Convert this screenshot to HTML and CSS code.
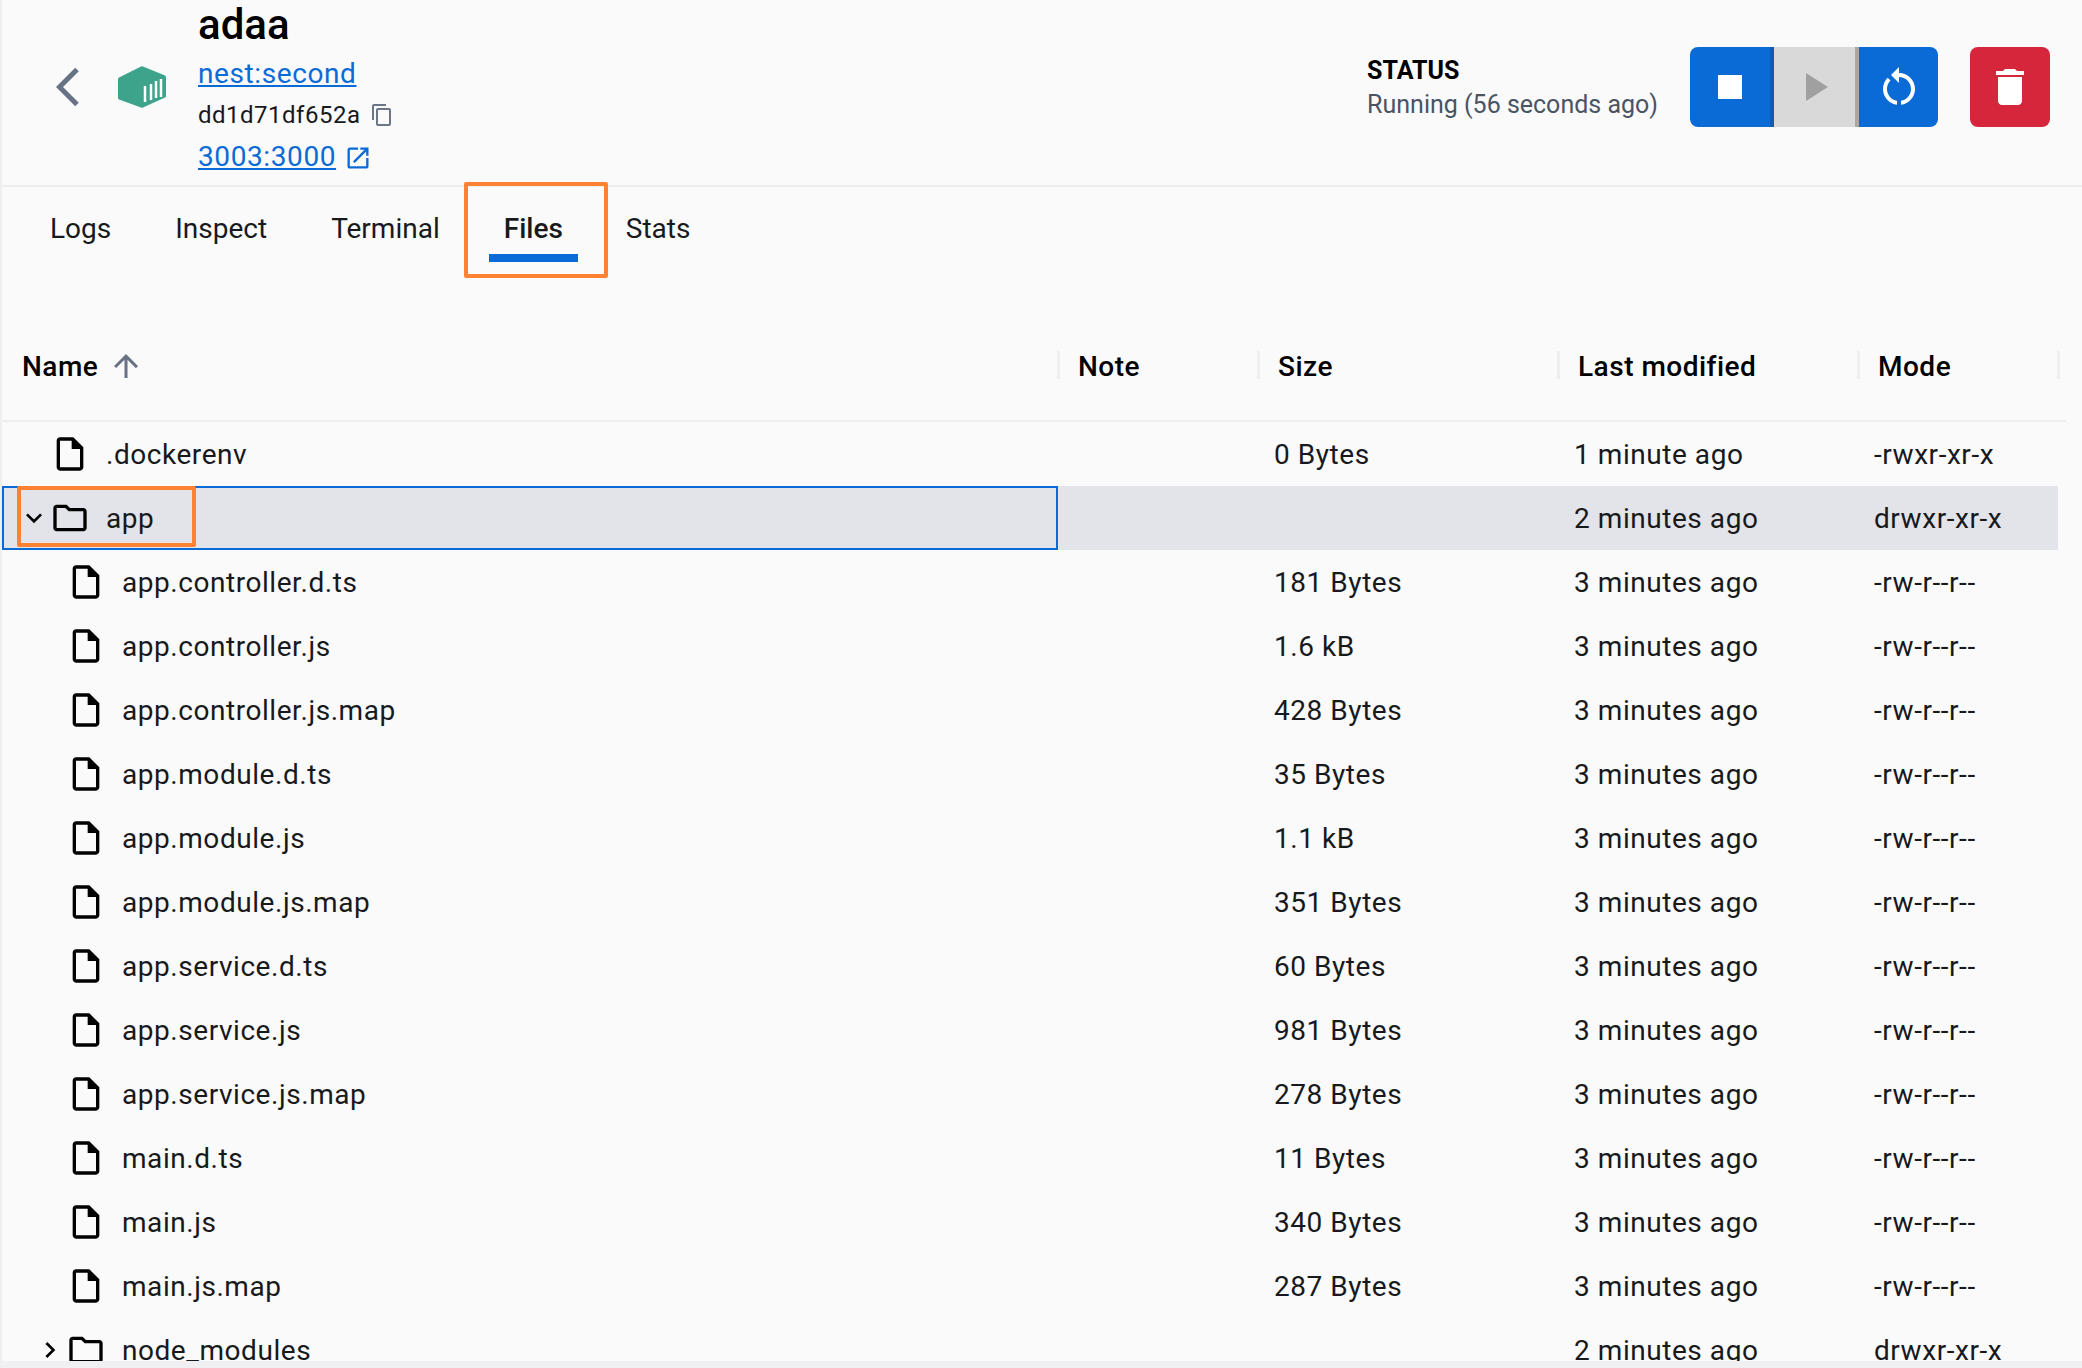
FILE: index.html
```html
<!DOCTYPE html>
<html lang="en">
<head>
  <meta charset="UTF-8" />
  <title>adaa | Files</title>
  <link rel="stylesheet" href="styles.css">
</head>
<body>
  <svg class="sprites" width="0" height="0">
    <symbol id="file" viewBox="0 0 24 24"><path d="M14 2H6c-1.1 0-2 .9-2 2v16c0 1.1.9 2 2 2h12c1.1 0 2-.9 2-2V8l-6-6zM6 20V4h7v5h5v11H6z"/></symbol>
    <symbol id="folder" viewBox="0 0 24 24"><path d="M20 6h-8l-2-2H4c-1.1 0-1.99.9-1.99 2L2 18c0 1.1.9 2 2 2h16c1.1 0 2-.9 2-2V8c0-1.1-.9-2-2-2zm0 12H4V6h5.17l2 2H20v10z"/></symbol>
    <symbol id="chev-down" viewBox="0 0 24 24"><path d="M7.41 8.59 12 13.17l4.59-4.58L18 10l-6 6-6-6z"/></symbol>
    <symbol id="chev-right" viewBox="0 0 24 24"><path d="M8.59 16.59 13.17 12 8.59 7.41 10 6l6 6-6 6z"/></symbol>
  </svg>

  <div class="app">
    <header class="top-bar">
      <div class="top-left">
        <svg class="back-icon" viewBox="0 0 24 40"><polyline points="21,2.5 3.5,20 21,37.5" /></svg>
        <svg class="container-icon" viewBox="0 0 48 42">
          <path class="hex" d="M23 .5 Q24 0 25 .5 L47 9.5 Q48 10 48 11 V30 Q48 31 47 31.5 L25 41.5 Q24 42 23 41.5 L1 33.5 Q0 33 0 32 V13 Q0 12 1 11.5 Z"/>
          <path class="hex-lines" d="M27 36 V20 M33 34 V18 M38 32 V15 M43 31 V13"/>
        </svg>
        <div class="container-info">
          <div class="container-name">adaa</div>
          <a class="image-link" href="#">nest:second</a>
          <div class="container-id">dd1d71df652a
            <svg class="copy-icon" viewBox="0 0 24 24"><path d="M16 1H4c-1.1 0-2 .9-2 2v14h2V3h12V1zm3 4H8c-1.1 0-2 .9-2 2v14c0 1.1.9 2 2 2h11c1.1 0 2-.9 2-2V7c0-1.1-.9-2-2-2zm0 16H8V7h11v14z"/></svg>
          </div>
          <div class="port-row"><a class="image-link" href="#">3003:3000</a>
            <svg class="open-icon" viewBox="0 0 24 24"><path d="M19 19H5V5h7V3H5c-1.11 0-2 .9-2 2v14c0 1.1.89 2 2 2h14c1.1 0 2-.9 2-2v-7h-2v7zM14 3v2h3.59l-9.83 9.83 1.41 1.41L19 6.41V10h2V3h-7z"/></svg>
          </div>
        </div>
      </div>
      <div class="top-right">
        <div class="status">
          <div class="status-label">STATUS</div>
          <div class="status-text">Running (56 seconds ago)</div>
        </div>
        <div class="btn-group">
          <button class="btn btn-stop"><span class="stop-square"></span></button>
          <button class="btn btn-play"><span class="play-triangle"></span></button>
          <button class="btn btn-restart">
            <svg viewBox="0 0 24 24"><path d="M12 5V2L8 6l4 4V7c3.31 0 6 2.69 6 6 0 2.97-2.17 5.43-5 5.91v2.02c3.95-.49 7-3.85 7-7.93 0-4.42-3.58-8-8-8zm-6 8c0-1.65.67-3.15 1.76-4.24L6.34 7.34C4.9 8.79 4 10.79 4 13c0 4.08 3.05 7.44 7 7.93v-2.02c-2.83-.48-5-2.94-5-5.91z"/></svg>
          </button>
        </div>
        <button class="btn btn-delete">
          <svg viewBox="0 0 24 24"><path d="M6 19c0 1.1.9 2 2 2h8c1.1 0 2-.9 2-2V7H6v12zM19 4h-3.5l-1-1h-5l-1 1H5v2h14V4z"/></svg>
        </button>
      </div>
    </header>

    <nav class="tabs">
      <div class="tab">Logs</div>
      <div class="tab">Inspect</div>
      <div class="tab">Terminal</div>
      <div class="tab active">Files<span class="callout callout-tab"></span></div>
      <div class="tab">Stats</div>
    </nav>

    <section class="files">
      <div class="table-head">
        <div class="th"><span>Name</span><svg class="sort-icon" viewBox="0 0 24 24"><path d="m4 12 1.41 1.41L11 7.83V20h2V7.83l5.58 5.59L20 12l-8-8-8 8z"/></svg></div>
        <div class="th">Note</div>
        <div class="th">Size</div>
        <div class="th">Last modified</div>
        <div class="th">Mode</div>
      </div>

      <div class="row">
        <div class="name"><span class="caret"></span><svg class="node-icon"><use href="#file"/></svg><span>.dockerenv</span></div>
        <div></div><div class="size">0 Bytes</div><div class="cell">1 minute ago</div><div class="cell">-rwxr-xr-x</div>
      </div>
      <div class="row selected">
        <div class="name"><svg class="caret"><use href="#chev-down"/></svg><svg class="node-icon"><use href="#folder"/></svg><span>app</span><span class="callout callout-row"></span></div>
        <div></div><div class="size"></div><div class="cell">2 minutes ago</div><div class="cell">drwxr-xr-x</div>
      </div>
      <div class="row">
        <div class="name child"><span class="caret"></span><svg class="node-icon"><use href="#file"/></svg><span>app.controller.d.ts</span></div>
        <div></div><div class="size">181 Bytes</div><div class="cell">3 minutes ago</div><div class="cell">-rw-r--r--</div>
      </div>
      <div class="row">
        <div class="name child"><span class="caret"></span><svg class="node-icon"><use href="#file"/></svg><span>app.controller.js</span></div>
        <div></div><div class="size">1.6 kB</div><div class="cell">3 minutes ago</div><div class="cell">-rw-r--r--</div>
      </div>
      <div class="row">
        <div class="name child"><span class="caret"></span><svg class="node-icon"><use href="#file"/></svg><span>app.controller.js.map</span></div>
        <div></div><div class="size">428 Bytes</div><div class="cell">3 minutes ago</div><div class="cell">-rw-r--r--</div>
      </div>
      <div class="row">
        <div class="name child"><span class="caret"></span><svg class="node-icon"><use href="#file"/></svg><span>app.module.d.ts</span></div>
        <div></div><div class="size">35 Bytes</div><div class="cell">3 minutes ago</div><div class="cell">-rw-r--r--</div>
      </div>
      <div class="row">
        <div class="name child"><span class="caret"></span><svg class="node-icon"><use href="#file"/></svg><span>app.module.js</span></div>
        <div></div><div class="size">1.1 kB</div><div class="cell">3 minutes ago</div><div class="cell">-rw-r--r--</div>
      </div>
      <div class="row">
        <div class="name child"><span class="caret"></span><svg class="node-icon"><use href="#file"/></svg><span>app.module.js.map</span></div>
        <div></div><div class="size">351 Bytes</div><div class="cell">3 minutes ago</div><div class="cell">-rw-r--r--</div>
      </div>
      <div class="row">
        <div class="name child"><span class="caret"></span><svg class="node-icon"><use href="#file"/></svg><span>app.service.d.ts</span></div>
        <div></div><div class="size">60 Bytes</div><div class="cell">3 minutes ago</div><div class="cell">-rw-r--r--</div>
      </div>
      <div class="row">
        <div class="name child"><span class="caret"></span><svg class="node-icon"><use href="#file"/></svg><span>app.service.js</span></div>
        <div></div><div class="size">981 Bytes</div><div class="cell">3 minutes ago</div><div class="cell">-rw-r--r--</div>
      </div>
      <div class="row">
        <div class="name child"><span class="caret"></span><svg class="node-icon"><use href="#file"/></svg><span>app.service.js.map</span></div>
        <div></div><div class="size">278 Bytes</div><div class="cell">3 minutes ago</div><div class="cell">-rw-r--r--</div>
      </div>
      <div class="row">
        <div class="name child"><span class="caret"></span><svg class="node-icon"><use href="#file"/></svg><span>main.d.ts</span></div>
        <div></div><div class="size">11 Bytes</div><div class="cell">3 minutes ago</div><div class="cell">-rw-r--r--</div>
      </div>
      <div class="row">
        <div class="name child"><span class="caret"></span><svg class="node-icon"><use href="#file"/></svg><span>main.js</span></div>
        <div></div><div class="size">340 Bytes</div><div class="cell">3 minutes ago</div><div class="cell">-rw-r--r--</div>
      </div>
      <div class="row">
        <div class="name child"><span class="caret"></span><svg class="node-icon"><use href="#file"/></svg><span>main.js.map</span></div>
        <div></div><div class="size">287 Bytes</div><div class="cell">3 minutes ago</div><div class="cell">-rw-r--r--</div>
      </div>
      <div class="row">
        <div class="name child"><svg class="caret"><use href="#chev-right"/></svg><svg class="node-icon"><use href="#folder"/></svg><span>node_modules</span></div>
        <div></div><div class="size"></div><div class="cell">2 minutes ago</div><div class="cell">drwxr-xr-x</div>
      </div>
    </section>

    <div class="bottom-bar"></div>
  </div>
</body>
</html>
```

FILE: styles.css
```css
* {
  box-sizing: border-box;
}
html, body {
  margin: 0;
  padding: 0;
}
body {
  font-family: Roboto, "Liberation Sans", sans-serif;
  font-size: 28px;
  background: #fafafa;
  color: #17191c;
}
.sprites {
  position: absolute;
}
.app {
  height: 1368px;
  display: flex;
  flex-direction: column;
  overflow: hidden;
  border-left: 2px solid #efefef;
}

/* top bar */
.top-bar {
  height: 187px;
  flex-shrink: 0;
  display: flex;
  justify-content: space-between;
  align-items: flex-start;
  border-bottom: 2px solid #eeeeee;
}
.top-left {
  display: flex;
  align-items: center;
  height: 174px;
}
.back-icon {
  width: 24px;
  height: 40px;
  margin-left: 54px;
  fill: none;
  stroke: #677285;
  stroke-width: 5;
}
.container-icon {
  width: 48px;
  height: 42px;
  margin-left: 38px;
}
.hex {
  fill: #3ea38b;
}
.hex-lines {
  stroke: #fff;
  stroke-width: 2.5;
  fill: none;
}
.container-info {
  margin-left: 32px;
  padding-top: 1px;
  align-self: flex-start;
  display: flex;
  flex-direction: column;
}
.container-name {
  font-size: 42px;
  font-weight: 500;
  line-height: 48px;
  color: #000;
}
.image-link {
  color: #0b6bd6;
  font-size: 28px;
  line-height: 50px;
  height: 50px;
  letter-spacing: 0.6px;
}
.container-id {
  font-size: 24px;
  line-height: 32px;
  height: 32px;
  margin-bottom: 1px;
  letter-spacing: 0.5px;
  display: flex;
  align-items: center;
  gap: 10px;
}
.copy-icon {
  width: 24px;
  height: 24px;
  fill: #6c7686;
}
.port-row {
  display: flex;
  align-items: center;
  gap: 8px;
}
.open-icon {
  width: 28px;
  height: 28px;
  margin-top: 2px;
  fill: #0b6bd6;
}
.top-right {
  display: flex;
  align-items: center;
  height: 174px;
  margin-right: 32px;
}
.status {
  margin-right: 32px;
  padding-top: 2px;
}
.status-label {
  font-size: 25px;
  font-weight: 700;
  line-height: 34px;
  color: #000;
}
.status-text {
  font-size: 25px;
  line-height: 34px;
  color: #4a5462;
}
.btn-group {
  display: flex;
  margin-right: 32px;
  border-radius: 8px;
  overflow: hidden;
}
.btn {
  height: 80px;
  border: none;
  padding: 0;
  display: flex;
  align-items: center;
  justify-content: center;
}
.btn svg {
  width: 48px;
  height: 48px;
  fill: #fff;
}
.btn-stop {
  width: 84px;
  background: #0b6bd6;
  border-right: 4px solid #0a5db8;
}
.stop-square {
  width: 24px;
  height: 24px;
  background: #fff;
}
.btn-play {
  width: 85px;
  padding-left: 4px;
  background: #d9d9d9;
  border-right: 4px solid #a8a8a8;
}
.play-triangle {
  border-left: 22px solid #a0a0a0;
  border-top: 14px solid transparent;
  border-bottom: 14px solid transparent;
}
.btn-restart {
  width: 79px;
  background: #0b6bd6;
}
.btn-delete {
  width: 80px;
  background: #d6263b;
  border-radius: 8px;
}

/* tabs */
.tabs {
  display: flex;
  gap: 34px;
  padding: 15px 0 0 33px;
  flex-shrink: 0;
}
.tab {
  position: relative;
  height: 60px;
  padding: 0 15px;
  line-height: 54px;
  border-bottom: 8px solid transparent;
}
.tab.active {
  font-weight: 500;
  margin-right: -1px;
  border-bottom-color: #0b6bd6;
}

/* orange annotation boxes laid over the shot */
.callout {
  position: absolute;
  border: 4px solid #ff8132;
  border-radius: 2px;
}
.callout-tab {
  left: -25px;
  top: -20px;
  width: 144px;
  height: 96px;
}
.callout-row {
  left: 13px;
  top: -2px;
  width: 179px;
  height: 61px;
}

/* table */
.files {
  flex: 1;
  min-height: 0;
  overflow: hidden;
  margin-top: 58px;
}
.table-head {
  display: grid;
  grid-template-columns: 1058px 200px 300px 300px 200px;
  width: 2064px;
  height: 102px;
  padding-top: 31px;
  align-items: start;
  border-bottom: 2px solid #eeeeee;
}
.th {
  height: 28px;
  padding-top: 2px;
  font-size: 28px;
  font-weight: 500;
  letter-spacing: 0.5px;
  padding-left: 18px;
  border-right: 3px solid #eeeeee;
  display: flex;
  align-items: center;
  color: #000;
}
.th:first-child {
  padding-left: 20px;
}
.sort-icon {
  width: 36px;
  height: 36px;
  margin-left: 10px;
  fill: #677285;
}
.row {
  display: grid;
  grid-template-columns: 1056px 200px 300px 300px 200px;
  width: 2056px;
  height: 64px;
  align-items: center;
  letter-spacing: 0.55px;
}
.row.selected {
  background: #e3e4e9;
}
.name {
  position: relative;
  display: flex;
  align-items: center;
  height: 64px;
  padding-left: 16px;
}
.name.child {
  padding-left: 32px;
}
.selected .name {
  border: 2px solid #0b6bd6;
  padding-left: 14px;
}
.caret {
  width: 32px;
  height: 32px;
  flex-shrink: 0;
}
.node-icon {
  width: 40px;
  height: 40px;
  margin-right: 16px;
  flex-shrink: 0;
}
.size {
  padding-left: 16px;
}
.cell {
  padding-left: 16px;
}
.bottom-bar {
  height: 7px;
  flex-shrink: 0;
  margin-left: -2px;
  background: #f0f0f2;
  border-left: 2px solid #3ea38b;
}
```
